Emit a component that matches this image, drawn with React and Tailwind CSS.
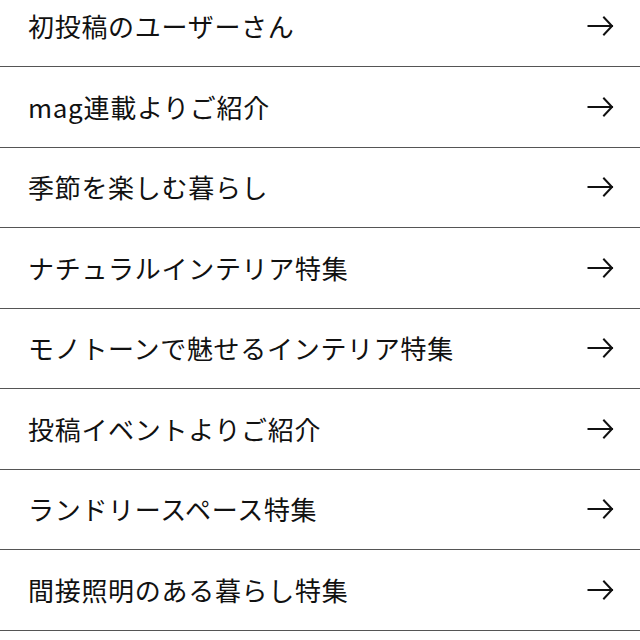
import React from "react";

const items = [
  "初投稿のユーザーさん",
  "mag連載よりご紹介",
  "季節を楽しむ暮らし",
  "ナチュラルインテリア特集",
  "モノトーンで魅せるインテリア特集",
  "投稿イベントよりご紹介",
  "ランドリースペース特集",
  "間接照明のある暮らし特集",
];

function Arrow() {
  return (
    <svg width="28" height="22" viewBox="0 0 28 22" fill="none" className="shrink-0">
      <path d="M2.5 11 H26" stroke="#111" strokeWidth="2" strokeLinecap="square" />
      <path d="M18 2.5 L26 11 L18 19.5" stroke="#111" strokeWidth="2" strokeLinecap="square" strokeLinejoin="miter" />
    </svg>
  );
}

export default function App() {
  return (
    <div className="w-[640px] h-[640px] overflow-hidden bg-white">
      <ul className="-mt-[13.5px]">
        {items.map((t) => (
          <li
            key={t}
            className="h-[80.5px] border-b border-[#555] flex items-center justify-between pl-[28px] pr-[26px]"
          >
            <span
              className="text-[26px] leading-none text-[#111] tracking-[0.7px]"
              style={{ fontFamily: '"Noto Sans CJK JP", "Noto Sans", sans-serif' }}
            >
              {t}
            </span>
            <Arrow />
          </li>
        ))}
      </ul>
    </div>
  );
}
